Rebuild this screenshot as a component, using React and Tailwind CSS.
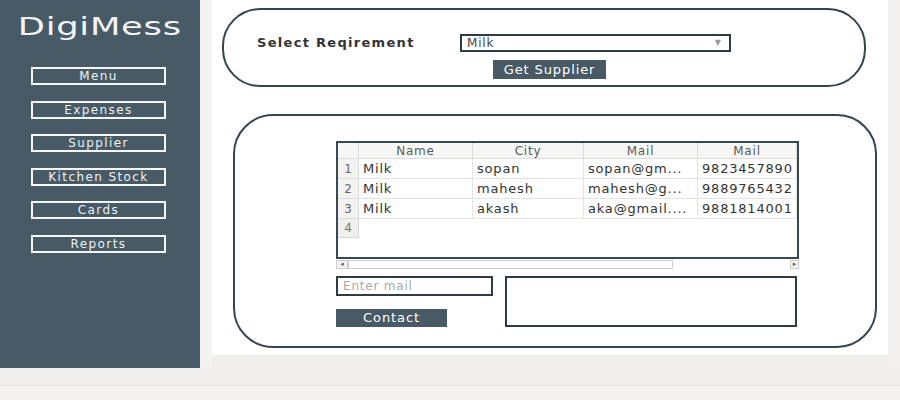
import React from 'react';

const NAV = ['Menu', 'Expenses', 'Supplier', 'Kitchen Stock', 'Cards', 'Reports'];

const ROWS = [
  ['Milk', 'sopan', 'sopan@gm...', '9823457890'],
  ['Milk', 'mahesh', 'mahesh@g...', '9889765432'],
  ['Milk', 'akash', 'aka@gmail....', '9881814001'],
];

const COLS = ['w-[114px]', 'w-[111px]', 'w-[114px]', 'w-[99px]'];
const HEADS = ['Name', 'City', 'Mail', 'Mail'];

function Sidebar() {
  return (
    <aside className="w-[200px] h-full bg-[#475a66] flex flex-col">
      <div className="h-[34px] mt-[10px] flex items-center justify-center">
        <span className="inline-block text-[24px] text-[#f2f4f5] scale-x-[1.47] tracking-[0.5px]">DigiMess</span>
      </div>
      <nav className="ml-[31px] mt-[23px] flex flex-col gap-[15.5px]">
        {NAV.map((item) => (
          <div
            key={item}
            className="w-[135px] h-[18px] border-2 border-[#f4f6f7] flex items-center justify-center text-[12px] tracking-[1.4px] text-[#eef1f2]"
          >
            {item}
          </div>
        ))}
      </nav>
    </aside>
  );
}

function SupplierTable() {
  return (
    <div>
      <div className="w-[463px] h-[118px] border-2 border-[#3a4850] bg-white overflow-hidden">
        <div className="flex h-[16px] bg-[#f6f6f5] border-b border-[#dcdcdc] text-[12px] tracking-[0.8px] text-[#5a5a5a]">
          <div className="w-[21px] border-r border-[#dcdcdc]" />
          {HEADS.map((h, i) => (
            <div key={i} className={`${COLS[i]} border-r border-[#dcdcdc] flex items-center justify-center`}>
              {h}
            </div>
          ))}
        </div>
        {ROWS.map((row, r) => (
          <div key={r} className="flex h-[20px] text-[13px] tracking-[0.8px] text-[#333]">
            <div className="w-[21px] bg-[#f3f3f2] border-r border-b border-[#dcdcdc] flex items-center justify-center text-[12px] text-[#666] tracking-normal">
              {r + 1}
            </div>
            {row.map((cell, c) => (
              <div
                key={c}
                className={`${COLS[c]} border-r border-b border-[#e4e4e4] flex items-center pl-[4px] whitespace-nowrap overflow-hidden`}
              >
                {cell}
              </div>
            ))}
          </div>
        ))}
        <div className="w-[21px] h-[19px] bg-[#efefee] border-r border-b border-[#d6d6d6] flex items-center justify-center text-[12px] text-[#777]">
          4
        </div>
      </div>
      <div className="flex h-[9px] mt-[1px] w-[463px] text-[7px] text-[#666] leading-none">
        <div className="w-[12px] border border-[#cfcfcf] bg-[#f4f4f4] flex items-center justify-center">◂</div>
        <div className="w-[325px] border border-[#cfcfcf] bg-white" />
        <div className="flex-1" />
        <div className="w-[9px] border border-[#cfcfcf] bg-[#f4f4f4] flex items-center justify-center">▸</div>
      </div>
    </div>
  );
}

export default function App() {
  return (
    <div className="w-[900px] h-[400px] bg-[#efeeec] flex flex-col" style={{ fontFamily: '"DejaVu Sans", sans-serif' }}>
      <div className="flex h-[368px]">
        <Sidebar />
        <div className="w-[12px] bg-[#f4f3f1]" />
        <main className="w-[676px] h-[355px] bg-white flex flex-col">
          {/* requirement panel */}
          <section className="ml-[10px] mt-[8px] w-[644px] h-[79px] rounded-[38px] border-2 border-[#36454d] pl-[33px] pt-[24px]">
            <div className="flex items-center h-[18px]">
              <span className="w-[203px] text-[13px] font-bold tracking-[1.3px] text-[#333]">Select Reqirement</span>
              <div className="w-[271px] h-[18px] border-2 border-[#2f3b42] flex items-center justify-between pl-[5px] pr-[8px]">
                <span className="text-[12px] tracking-[0.8px] text-[#444]">Milk</span>
                <span className="text-[8px] text-[#999]">▼</span>
              </div>
            </div>
            <button className="ml-[236px] mt-[8px] w-[113px] h-[19px] bg-[#475a66] text-white text-[13px] tracking-[0.9px] flex items-center justify-center">
              Get Supplier
            </button>
          </section>

          {/* supplier panel */}
          <section className="ml-[21px] mt-[27px] w-[644px] h-[234px] rounded-[40px] border-2 border-[#36454d] pl-[101px] pt-[25px]">
            <SupplierTable />
            <div className="flex mt-[7px]">
              <div className="flex flex-col">
                <div className="w-[157px] h-[20px] border-2 border-[#2f3b42] flex items-center pl-[5px] text-[12px] tracking-[0.8px] text-[#aaa]">
                  Enter mail
                </div>
                <button className="mt-[13px] w-[111px] h-[18px] bg-[#475a66] text-white text-[13px] tracking-[0.9px] flex items-center justify-center">
                  Contact
                </button>
              </div>
              <div className="ml-[12px] w-[292px] h-[51px] border-2 border-[#2f3b42]" />
            </div>
          </section>
        </main>
        <div className="w-[12px] bg-[#f1f0ee]" />
      </div>
      <div className="mt-[17px] flex-1 border-t border-[#e2e1df] bg-[#f4f3f1]" />
    </div>
  );
}
